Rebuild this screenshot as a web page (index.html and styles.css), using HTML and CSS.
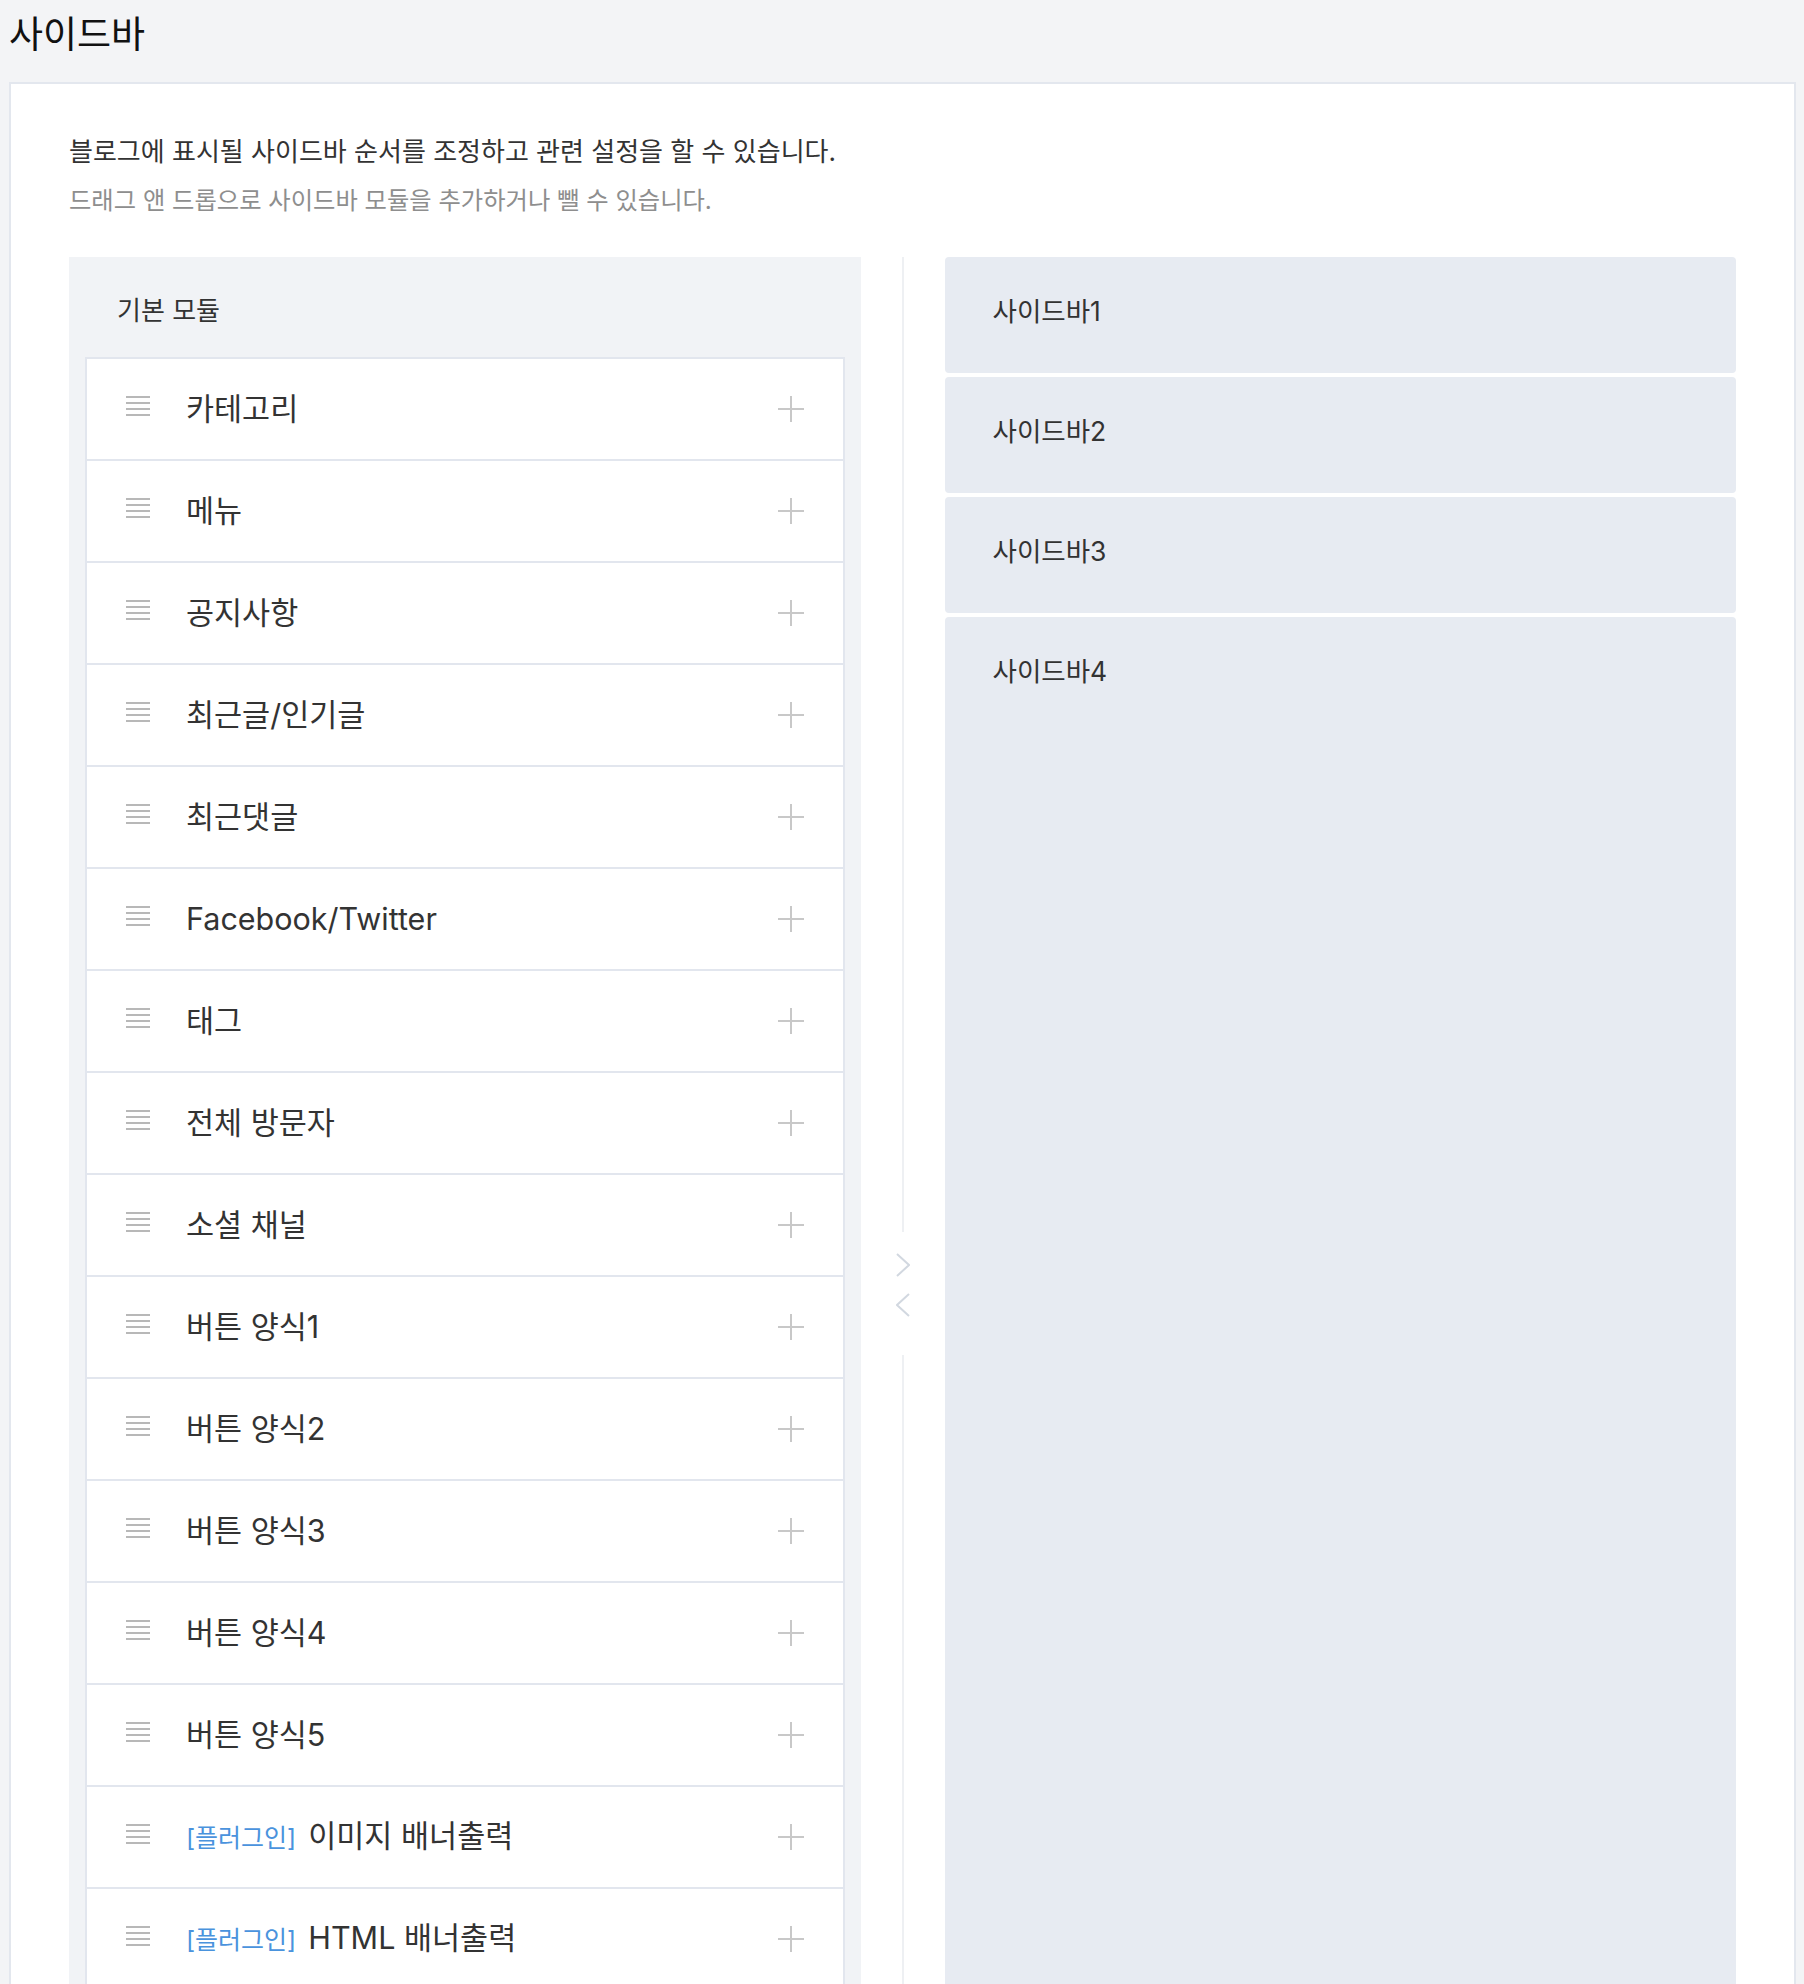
FILE: index.html
```html
<!DOCTYPE html>
<html lang="ko">
<head>
  <meta charset="utf-8">
  <title>사이드바</title>
  <link rel="stylesheet" href="styles.css">
</head>
<body>
  <div class="page-head">
    <h1 class="page-title">사이드바</h1>
  </div>

  <div class="card">
    <div class="intro">
      <p class="intro-main">블로그에 표시될 사이드바 순서를 조정하고 관련 설정을 할 수 있습니다.</p>
      <p class="intro-sub">드래그 앤 드롭으로 사이드바 모듈을 추가하거나 뺄 수 있습니다.</p>
    </div>

    <div class="editor">
      <div class="module-panel">
        <h2 class="panel-title">기본 모듈</h2>
        <ul class="module-list">
          <li class="module-item">
            <svg class="handle" width="24" height="20" viewBox="0 0 24 20"><path d="M0 1H24M0 7H24M0 13H24M0 19H24"/></svg>
            <span class="module-name">카테고리</span>
            <button class="add-btn"><svg width="26" height="26" viewBox="0 0 26 26"><path d="M13 0V26M0 13H26"/></svg></button>
          </li>
          <li class="module-item">
            <svg class="handle" width="24" height="20" viewBox="0 0 24 20"><path d="M0 1H24M0 7H24M0 13H24M0 19H24"/></svg>
            <span class="module-name">메뉴</span>
            <button class="add-btn"><svg width="26" height="26" viewBox="0 0 26 26"><path d="M13 0V26M0 13H26"/></svg></button>
          </li>
          <li class="module-item">
            <svg class="handle" width="24" height="20" viewBox="0 0 24 20"><path d="M0 1H24M0 7H24M0 13H24M0 19H24"/></svg>
            <span class="module-name">공지사항</span>
            <button class="add-btn"><svg width="26" height="26" viewBox="0 0 26 26"><path d="M13 0V26M0 13H26"/></svg></button>
          </li>
          <li class="module-item">
            <svg class="handle" width="24" height="20" viewBox="0 0 24 20"><path d="M0 1H24M0 7H24M0 13H24M0 19H24"/></svg>
            <span class="module-name">최근글/인기글</span>
            <button class="add-btn"><svg width="26" height="26" viewBox="0 0 26 26"><path d="M13 0V26M0 13H26"/></svg></button>
          </li>
          <li class="module-item">
            <svg class="handle" width="24" height="20" viewBox="0 0 24 20"><path d="M0 1H24M0 7H24M0 13H24M0 19H24"/></svg>
            <span class="module-name">최근댓글</span>
            <button class="add-btn"><svg width="26" height="26" viewBox="0 0 26 26"><path d="M13 0V26M0 13H26"/></svg></button>
          </li>
          <li class="module-item">
            <svg class="handle" width="24" height="20" viewBox="0 0 24 20"><path d="M0 1H24M0 7H24M0 13H24M0 19H24"/></svg>
            <span class="module-name">Facebook/Twitter</span>
            <button class="add-btn"><svg width="26" height="26" viewBox="0 0 26 26"><path d="M13 0V26M0 13H26"/></svg></button>
          </li>
          <li class="module-item">
            <svg class="handle" width="24" height="20" viewBox="0 0 24 20"><path d="M0 1H24M0 7H24M0 13H24M0 19H24"/></svg>
            <span class="module-name">태그</span>
            <button class="add-btn"><svg width="26" height="26" viewBox="0 0 26 26"><path d="M13 0V26M0 13H26"/></svg></button>
          </li>
          <li class="module-item">
            <svg class="handle" width="24" height="20" viewBox="0 0 24 20"><path d="M0 1H24M0 7H24M0 13H24M0 19H24"/></svg>
            <span class="module-name">전체 방문자</span>
            <button class="add-btn"><svg width="26" height="26" viewBox="0 0 26 26"><path d="M13 0V26M0 13H26"/></svg></button>
          </li>
          <li class="module-item">
            <svg class="handle" width="24" height="20" viewBox="0 0 24 20"><path d="M0 1H24M0 7H24M0 13H24M0 19H24"/></svg>
            <span class="module-name">소셜 채널</span>
            <button class="add-btn"><svg width="26" height="26" viewBox="0 0 26 26"><path d="M13 0V26M0 13H26"/></svg></button>
          </li>
          <li class="module-item">
            <svg class="handle" width="24" height="20" viewBox="0 0 24 20"><path d="M0 1H24M0 7H24M0 13H24M0 19H24"/></svg>
            <span class="module-name">버튼 양식1</span>
            <button class="add-btn"><svg width="26" height="26" viewBox="0 0 26 26"><path d="M13 0V26M0 13H26"/></svg></button>
          </li>
          <li class="module-item">
            <svg class="handle" width="24" height="20" viewBox="0 0 24 20"><path d="M0 1H24M0 7H24M0 13H24M0 19H24"/></svg>
            <span class="module-name">버튼 양식2</span>
            <button class="add-btn"><svg width="26" height="26" viewBox="0 0 26 26"><path d="M13 0V26M0 13H26"/></svg></button>
          </li>
          <li class="module-item">
            <svg class="handle" width="24" height="20" viewBox="0 0 24 20"><path d="M0 1H24M0 7H24M0 13H24M0 19H24"/></svg>
            <span class="module-name">버튼 양식3</span>
            <button class="add-btn"><svg width="26" height="26" viewBox="0 0 26 26"><path d="M13 0V26M0 13H26"/></svg></button>
          </li>
          <li class="module-item">
            <svg class="handle" width="24" height="20" viewBox="0 0 24 20"><path d="M0 1H24M0 7H24M0 13H24M0 19H24"/></svg>
            <span class="module-name">버튼 양식4</span>
            <button class="add-btn"><svg width="26" height="26" viewBox="0 0 26 26"><path d="M13 0V26M0 13H26"/></svg></button>
          </li>
          <li class="module-item">
            <svg class="handle" width="24" height="20" viewBox="0 0 24 20"><path d="M0 1H24M0 7H24M0 13H24M0 19H24"/></svg>
            <span class="module-name">버튼 양식5</span>
            <button class="add-btn"><svg width="26" height="26" viewBox="0 0 26 26"><path d="M13 0V26M0 13H26"/></svg></button>
          </li>
          <li class="module-item">
            <svg class="handle" width="24" height="20" viewBox="0 0 24 20"><path d="M0 1H24M0 7H24M0 13H24M0 19H24"/></svg>
            <span class="module-name"><span class="plugin-tag">[플러그인]</span>이미지 배너출력</span>
            <button class="add-btn"><svg width="26" height="26" viewBox="0 0 26 26"><path d="M13 0V26M0 13H26"/></svg></button>
          </li>
          <li class="module-item">
            <svg class="handle" width="24" height="20" viewBox="0 0 24 20"><path d="M0 1H24M0 7H24M0 13H24M0 19H24"/></svg>
            <span class="module-name"><span class="plugin-tag">[플러그인]</span>HTML 배너출력</span>
            <button class="add-btn"><svg width="26" height="26" viewBox="0 0 26 26"><path d="M13 0V26M0 13H26"/></svg></button>
          </li>
          <li class="module-item">
            <svg class="handle" width="24" height="20" viewBox="0 0 24 20"><path d="M0 1H24M0 7H24M0 13H24M0 19H24"/></svg>
            <span class="module-name"><span class="plugin-tag">[플러그인]</span>방문자 그래프</span>
            <button class="add-btn"><svg width="26" height="26" viewBox="0 0 26 26"><path d="M13 0V26M0 13H26"/></svg></button>
          </li>
          <li class="module-item">
            <svg class="handle" width="24" height="20" viewBox="0 0 24 20"><path d="M0 1H24M0 7H24M0 13H24M0 19H24"/></svg>
            <span class="module-name"><span class="plugin-tag">[플러그인]</span>카운터</span>
            <button class="add-btn"><svg width="26" height="26" viewBox="0 0 26 26"><path d="M13 0V26M0 13H26"/></svg></button>
          </li>
          <li class="module-item">
            <svg class="handle" width="24" height="20" viewBox="0 0 24 20"><path d="M0 1H24M0 7H24M0 13H24M0 19H24"/></svg>
            <span class="module-name"><span class="plugin-tag">[플러그인]</span>검색</span>
            <button class="add-btn"><svg width="26" height="26" viewBox="0 0 26 26"><path d="M13 0V26M0 13H26"/></svg></button>
          </li>
        </ul>
      </div>

      <div class="mover">
        <span class="mover-line"></span>
        <div class="mover-arrows">
          <svg width="14" height="24" viewBox="0 0 14 24"><polyline points="1,1 13,12 1,23"/></svg>
          <svg width="14" height="24" viewBox="0 0 14 24"><polyline points="13,1 1,12 13,23"/></svg>
        </div>
        <span class="mover-line"></span>
      </div>

      <div class="sidebar-list">
        <div class="sidebar-slot">사이드바1</div>
        <div class="sidebar-slot">사이드바2</div>
        <div class="sidebar-slot">사이드바3</div>
        <div class="sidebar-slot sidebar-slot-last">사이드바4</div>
      </div>
    </div>
  </div>
</body>
</html>
```

FILE: styles.css
```css
body {
  margin: 0;
  padding: 0;
  background-color: #f3f4f6;
  font-family: Inter, "Noto Sans CJK KR", sans-serif;
  color: #333;
}

.page-head {
  padding: 11px 9px 0;
}

.page-title {
  margin: 0;
  font-size: 37px;
  line-height: 48px;
  font-weight: 400;
  color: #111;
}

.card {
  margin: 23px 8px 0 9px;
  padding: 49px 58px 0;
  background-color: #fff;
  border: 2px solid #e3e7ee;
  border-bottom: none;
}

.intro p {
  margin: 0;
}

.intro-main {
  font-size: 26px;
  line-height: 38px;
  color: #333;
}

.intro-sub {
  margin-top: 12px !important;
  font-size: 24.3px;
  line-height: 34px;
  color: #8e8e8e;
}

.editor {
  display: grid;
  grid-template-columns: 1fr 84px 1fr;
  margin-top: 40px;
}

/* 왼쪽 기본 모듈 */
.module-panel {
  background-color: #f1f3f6;
  padding: 36px 16px 33px;
}

.panel-title {
  margin: 0 0 28px;
  padding-left: 32px;
  font-size: 26px;
  line-height: 36px;
  font-weight: 400;
  color: #333;
}

.module-list {
  list-style: none;
  margin: 0;
  padding: 0;
  border: 2px solid #e2e6ee;
  background-color: #fff;
}

.module-item {
  display: flex;
  align-items: center;
  height: 100px;
  padding: 0 39px 0 39px;
  border-top: 2px solid #e2e6ee;
}

.module-item:first-child {
  border-top: none;
}

.handle {
  flex: none;
  margin: 0 36px 6px 0;
  fill: none;
  stroke: #b8b8b8;
  stroke-width: 1.8;
}

.module-name {
  flex: 1;
  font-size: 30.5px;
  line-height: 40px;
  color: #333;
}

.plugin-tag {
  margin-right: 12px;
  font-size: 25px;
  color: #4a93dd;
}

.add-btn {
  flex: none;
  width: 26px;
  height: 26px;
  padding: 0;
  border: none;
  background: none;
  cursor: pointer;
}

.add-btn svg {
  display: block;
  fill: none;
  stroke: #c8c8c8;
  stroke-width: 2;
}

/* 가운데 이동 버튼 */
.mover {
  display: flex;
  flex-direction: column;
  align-items: center;
}

.mover-line {
  flex: 1;
  width: 2px;
  background-color: #eef0f3;
}

.mover-arrows {
  display: flex;
  flex-direction: column;
  gap: 16px;
  padding: 21px 0 38px;
}

.mover-arrows svg {
  display: block;
  fill: none;
  stroke: #d2d8e0;
  stroke-width: 2;
}

/* 오른쪽 사이드바 */
.sidebar-list {
  display: flex;
  flex-direction: column;
  gap: 4px;
}

.sidebar-slot {
  height: 116px;
  box-sizing: border-box;
  padding: 36px 48px;
  background-color: #e7ebf2;
  border-radius: 4px;
  font-size: 26.5px;
  line-height: 36px;
  color: #333;
}

.sidebar-slot-last {
  flex: 1;
}
```
